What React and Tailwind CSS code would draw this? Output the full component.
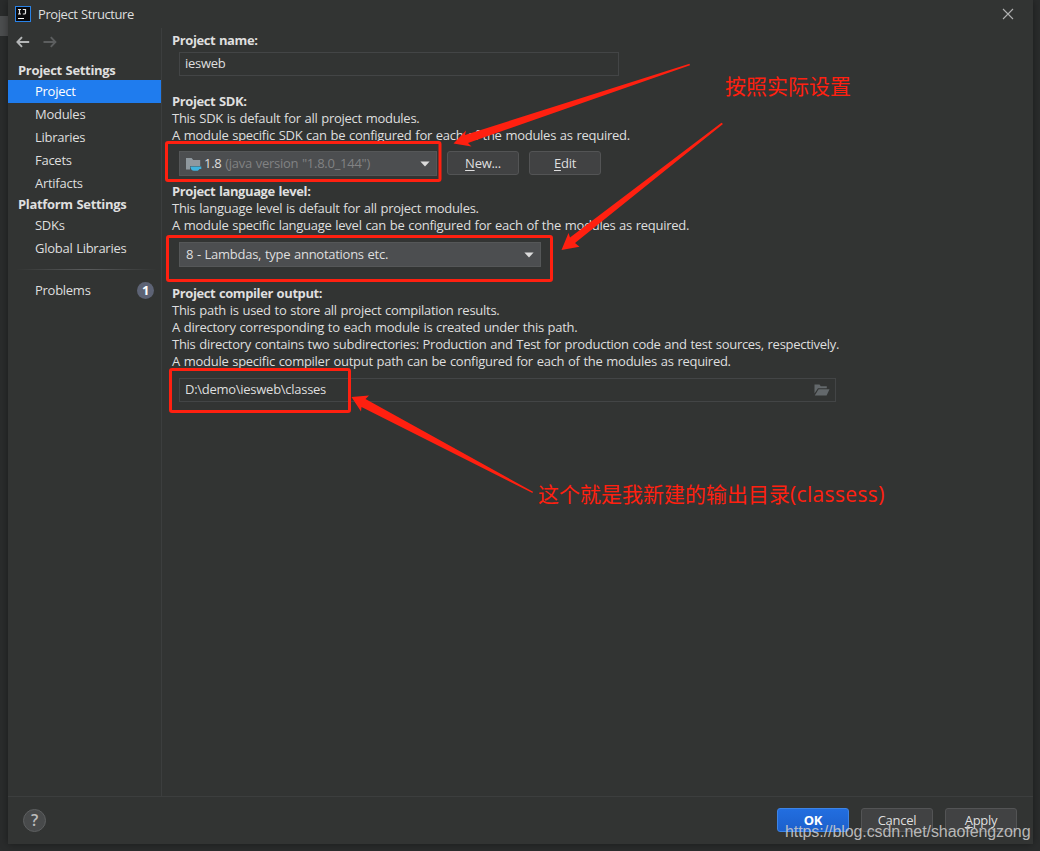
import React from "react";

const projectItems = ["Project", "Modules", "Libraries", "Facets", "Artifacts"];
const platformItems = ["SDKs", "Global Libraries"];

const NavItem = ({ label, active }) => (
  <div
    className={
      active
        ? "h-[23px] pl-[27px] leading-[23px] bg-[#1f7cee] text-white"
        : "h-[23px] pl-[27px] leading-[23px]"
    }
  >
    {label}
  </div>
);

const Caret = () => (
  <svg width="10" height="6" viewBox="0 0 10 6">
    <path d="M0.4 0.5h9.2L5 5.5z" fill="#dcdcdc" />
  </svg>
);

const Button = ({ children, primary }) => (
  <button
    className={
      primary
        ? "w-[72px] h-6 py-px leading-5 rounded-[3px] border border-[#3d84e6] bg-linear-to-b from-[#226ee0] to-[#1c60cc] font-bold text-white"
        : "w-[72px] h-6 py-px leading-5 rounded-[3px] border border-[#535455] bg-[#414243]"
    }
  >
    {children}
  </button>
);

const Sidebar = () => (
  <div className="w-[154px] border-r border-[#3c3e3e] flex flex-col">
    <div className="h-[33px] pl-2 pt-2 flex gap-[13px]">
      <svg width="14" height="12" viewBox="0 0 14 12" fill="none" stroke="#b4b6b7" strokeWidth="1.9">
        <path d="M13.2 6H1.4M6 1.2L1.4 6L6 10.8" />
      </svg>
      <svg width="14" height="12" viewBox="0 0 14 12" fill="none" stroke="#5c5e5f" strokeWidth="1.9">
        <path d="M0.5 6h11.8M7.8 1.2L12.4 6L7.8 10.8" />
      </svg>
    </div>
    <div className="h-[19px] pl-[10px] leading-[19px] font-bold tracking-[-0.32px]">Project Settings</div>
    {projectItems.map((item) => (
      <NavItem key={item} label={item} active={item === "Project"} />
    ))}
    <div className="h-[19px] pl-[10px] leading-[19px] font-bold tracking-[-0.32px]">Platform Settings</div>
    {platformItems.map((item) => (
      <NavItem key={item} label={item} />
    ))}
    <div className="mt-[9px] ml-2 mr-1 h-px bg-linear-to-r from-transparent via-[#5a5c5d] to-transparent" />
    <div className="mt-[9px] h-[23px] pl-[27px] pr-[7px] flex items-center justify-between">
      <span>Problems</span>
      <span className="w-[17px] h-[17px] rounded-full bg-[#5d6375] text-white font-bold text-center leading-[17px]">1</span>
    </div>
  </div>
);

const Heading = ({ children }) => (
  <div className="font-bold tracking-[-0.4px] leading-[17px]">{children}</div>
);

const Content = () => (
  <div className="flex-1 pl-[10px] pt-1">
    <Heading>Project name:</Heading>
    <div className="mt-[3px] ml-[7px] w-[440px] h-6 border border-[#434546] pl-[5px] leading-[21px]">iesweb</div>

    <div className="mt-[17px] leading-[17px]">
      <Heading>Project SDK:</Heading>
      <div>This SDK is default for all project modules.</div>
      <div>A module specific SDK can be configured for each of the modules as required.</div>
    </div>
    <div className="mt-[7px] ml-[7px] h-[25px] flex items-center">
      <div className="w-[258px] h-[25px] bg-[#4c4e50] border border-[#555758] pl-[6px] pr-[6px] flex items-center">
        <svg width="16" height="16" viewBox="0 0 16 16">
          <path d="M0 2h5.6l1.6 2h7v6H4v3.5H0z" fill="#8f989e" />
          <path d="M4.300 10.500h11v2.400h-1.900c-.5 1-1.400 1.900-2.600 1.900H8c-2 0-3.400-1.500-3.700-4.300z" fill="#3fb2dc" />
        </svg>
        <span className="ml-[2px] flex-1 whitespace-pre">
          1.8 <span className="text-[#818283]">(java version "1.8.0_144")</span>
        </span>
        <Caret />
      </div>
      <div className="ml-[10px] flex gap-[10px] relative -top-px">
        <Button><u className="underline-offset-2">N</u>ew...</Button>
        <Button><u className="underline-offset-2">E</u>dit</Button>
      </div>
    </div>

    <div className="mt-[7px] leading-[17px]">
      <Heading>Project language level:</Heading>
      <div>This language level is default for all project modules.</div>
      <div>A module specific language level can be configured for each of the modules as required.</div>
    </div>
    <div className="mt-2 ml-[7px] w-[362px] h-[25px] bg-[#4c4e50] border border-[#555758] pl-[6px] pr-[6px] flex items-center justify-between">
      <span>8 - Lambdas, type annotations etc.</span>
      <Caret />
    </div>

    <div className="mt-[18px] leading-[17px]">
      <Heading>Project compiler output:</Heading>
      <div>This path is used to store all project compilation results.</div>
      <div>A directory corresponding to each module is created under this path.</div>
      <div className="tracking-[-0.285px]">This directory contains two subdirectories: Production and Test for production code and test sources, respectively.</div>
      <div>A module specific compiler output path can be configured for each of the modules as required.</div>
    </div>
    <div className="mt-2 ml-[7px] w-[657px] h-6 border border-[#434546] pl-[5px] pr-[5px] flex items-center justify-between">
      <span>D:\demo\iesweb\classes</span>
      <svg width="16" height="12" viewBox="0 0 16 12" fill="#63686b">
        <path d="M0.5 0.5h5l1.3 1.7h6v2H4L0.5 9.5z" />
        <path d="M4.6 5.2H15.5L12.6 11.5H0.8z" />
      </svg>
    </div>
  </div>
);

// red marks drawn over the dialog
const Annotations = () => (
  <>
    <svg className="absolute inset-0" width="1040" height="851" viewBox="0 0 1040 851">
      <g fill="none" stroke="#ff2010" strokeWidth="3">
        <rect x="166.5" y="142.5" width="273.5" height="38" rx="1.5" />
        <rect x="167.5" y="236.5" width="384" height="44" rx="1.5" />
        <rect x="170.5" y="369.5" width="179" height="42" rx="1.5" />
      </g>
      <g fill="#ff2010">
        <path d="M453.500 143.500L466 130.500L465 135L689.500 63.800L690 65.300L468 143L471.500 146.500z" />
        <path d="M561.500 250L568.500 233L570 237.500L721.500 122.800L723 124L575 243L579.500 246.800z" />
        <path d="M351.500 397L369 395.500L365.500 399L533 491.800L532.500 493L361.500 407L361 411.500z" />
      </g>
    </svg>
    <div className="absolute left-[725px] top-[72px] h-[28px] leading-[28px] text-[21px] tracking-normal text-[#ff2010] whitespace-nowrap">
      按照实际设置
    </div>
    <div className="absolute left-[538px] top-[480px] h-[28px] leading-[28px] text-[21px] tracking-normal text-[#ff2010] whitespace-nowrap">
      这个就是我新建的输出目录<span className="tracking-[0.35px]">(classess)</span>
    </div>
  </>
);

const App = () => {
  return (
    <div className="relative w-[1040px] h-[851px] overflow-hidden bg-[#2a2c2c] pl-2 text-[13px] tracking-[-0.27px] [word-spacing:0.65px] text-[#dfdfdf] font-['Open_Sans','Noto_Sans_CJK_SC',sans-serif]">
      <div className="absolute left-0 top-4 w-2 h-5 bg-[#4c4e4f]" />
      <div className="relative w-[1025px] h-[844px] bg-[#323433] shadow-[0_0_8px_rgba(0,0,0,0.4)] flex flex-col">
        <div className="h-[28px] pl-[7px] pr-[19px] flex items-center">
          <svg width="16" height="16" viewBox="0 0 16 16">
            <rect x="0.5" y="0.5" width="15" height="15" fill="#0a0a0c" stroke="#2a83e8" />
            <path d="M3 3.500h3M4.500 3.500v4.500M3 8h3M7.800 3.500h2.700v3.500q0 1-1.200 1h-1.500" fill="none" stroke="#e8e8e8" strokeWidth="1.200" />
            <rect x="3" y="12" width="6" height="1" fill="#fff" />
          </svg>
          <span className="ml-[7px] pt-[2px] flex-1 tracking-[-0.42px]">Project Structure</span>
          <svg width="12" height="12" viewBox="0 0 12 12" stroke="#b0b1b1" strokeWidth="1.100">
            <path d="M1 1L11 11M11 1L1 11" />
          </svg>
        </div>
        <div className="flex-1 flex">
          <Sidebar />
          <Content />
        </div>
        <div className="h-[48px] border-t border-[#3c3e3e] pl-[15px] pr-4 flex items-center">
          <div className="w-[23px] h-[23px] rounded-full border border-[#5d5f60] bg-[#484a4b] text-center leading-[21px] text-[16px] font-semibold text-[#bcbcbc]">
            ?
          </div>
          <div className="ml-auto flex gap-3 relative -top-px">
            <Button primary>OK</Button>
            <Button>Cancel</Button>
            <Button><u className="underline-offset-2">A</u>pply</Button>
          </div>
        </div>
      </div>
      <Annotations />
      <div className="absolute left-[785px] top-[822px] h-5 leading-5 text-base tracking-[-0.08px] text-[#c9c9c9]/90 whitespace-nowrap font-['Liberation_Sans',sans-serif]">
        https://blog.csdn.net/shaofengzong
      </div>
    </div>
  );
};

export default App;
